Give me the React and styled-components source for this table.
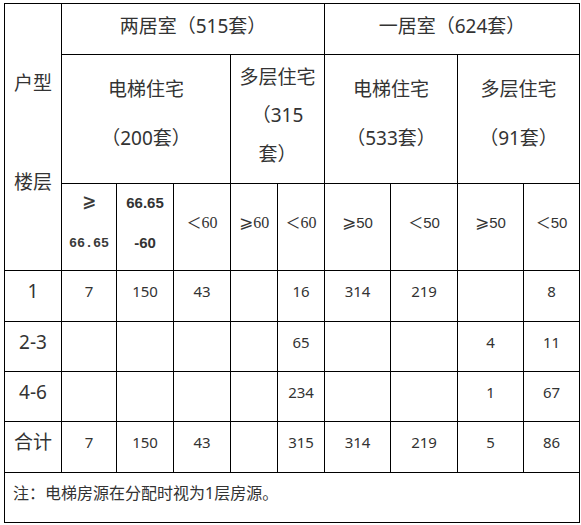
import React from "react";
import styled, { createGlobalStyle } from "styled-components";

const GlobalStyle = createGlobalStyle`
  html, body { margin: 0; padding: 0; background: #fff; }
  body { padding: 3px 0 0 4px; }
`;

const Table = styled.div`
  display: grid;
  grid-template-columns: 56px 54px 56px 56px 46px 46px 65px 66px 65px 55px;
  grid-template-rows: 50px 128px 86px 50px 49px 49px 50px 49px;
  gap: 1px;
  padding: 1px;
  background: #000;
  width: max-content;
  font-family: "Noto Sans", "Noto Sans CJK SC", sans-serif;
  color: #333;
`;

const Cell = styled.div`
  grid-column: span ${(p) => p.$span || 1};
  grid-row: span ${(p) => p.$rows || 1};
  background: #fff;
  display: flex;
  flex-direction: column;
  align-items: ${(p) => (p.$left ? "flex-start" : "center")};
  justify-content: center;
  box-sizing: border-box;
  padding: 0 0 ${(p) => (p.$pb ?? 10)}px ${(p) => (p.$left ? 8 : 0)}px;
  text-align: center;
  white-space: nowrap;
`;

const Line = styled.span`
  display: block;
  line-height: ${(p) => p.$lh || 30}px;
  font-size: ${(p) => p.$size || 19}px;
`;

const LabelGap = styled.span`
  display: block;
  height: 59px;
`;

const Mono = styled.span`
  display: block;
  line-height: 40px;
  font-family: "Liberation Mono", "DejaVu Sans Mono", monospace;
  font-weight: bold;
  font-size: 13.4px;
  color: #3a3a3a;
`;

const Bold = styled.span`
  display: block;
  line-height: 40px;
  font-family: "Liberation Sans", Arial, sans-serif;
  font-weight: bold;
  font-size: 15px;
  color: #333;
`;

const SerifRange = styled.span`
  font-family: "Liberation Serif", "DejaVu Serif", serif;
  font-size: 16px;
  line-height: 40px;
  color: #333;
`;

const SansRange = styled.span`
  font-family: "Liberation Sans", Arial, sans-serif;
  font-size: 15px;
  line-height: 40px;
  color: #333;
`;

const Sym = styled.span`
  font-family: "DejaVu Sans", "Noto Sans CJK SC", sans-serif;
  font-size: 17px;
`;

const FullSym = styled.span`
  font-family: "Noto Sans CJK SC", sans-serif;
  font-size: 15px;
`;

const Num = styled.span`
  font-size: 15px;
  line-height: 24px;
`;

const RowLabel = styled.span`
  font-size: 19px;
  line-height: 30px;
`;

const Note = styled.span`
  font-size: 16px;
  line-height: 24px;
`;

const ge = "⩾";
const lt = "＜";

const rows = [
  ["1", "7", "150", "43", "", "16", "314", "219", "", "8"],
  ["2-3", "", "", "", "", "65", "", "", "4", "11"],
  ["4-6", "", "", "", "", "234", "", "", "1", "67"],
  ["合计", "7", "150", "43", "", "315", "314", "219", "5", "86"],
];

export default function App() {
  return (
    <>
      <GlobalStyle />
      <Table>
        <Cell $rows={3} $pb={10}>
          <Line $lh={40}>户型</Line>
          <LabelGap />
          <Line $lh={40}>楼层</Line>
        </Cell>
        <Cell $span={5} $pb={7}>
          <Line>两居室（515套）</Line>
        </Cell>
        <Cell $span={4} $pb={7}>
          <Line>一居室（624套）</Line>
        </Cell>

        <Cell $span={3} $pb={11}>
          <Line $lh={49}>电梯住宅</Line>
          <Line $lh={49}>（200套）</Line>
        </Cell>
        <Cell $span={2} $pb={7}>
          <Line $lh={38.5}>多层住宅</Line>
          <Line $lh={38.5}>（315</Line>
          <Line $lh={38.5}>套）</Line>
        </Cell>
        <Cell $span={2} $pb={11}>
          <Line $lh={49}>电梯住宅</Line>
          <Line $lh={49}>（533套）</Line>
        </Cell>
        <Cell $span={2} $pb={11}>
          <Line $lh={49}>多层住宅</Line>
          <Line $lh={49}>（91套）</Line>
        </Cell>

        <Cell $pb={9}>
          <Mono><Sym>{ge}</Sym></Mono>
          <Mono>66.65</Mono>
        </Cell>
        <Cell $pb={9}>
          <Bold>66.65</Bold>
          <Bold>-60</Bold>
        </Cell>
        <Cell $pb={9}>
          <SerifRange><FullSym>{lt}</FullSym>60</SerifRange>
        </Cell>
        <Cell $pb={9}>
          <SerifRange><Sym>{ge}</Sym>60</SerifRange>
        </Cell>
        <Cell $pb={9}>
          <SerifRange><FullSym>{lt}</FullSym>60</SerifRange>
        </Cell>
        <Cell $pb={9}>
          <SansRange><Sym>{ge}</Sym>50</SansRange>
        </Cell>
        <Cell $pb={9}>
          <SansRange><FullSym>{lt}</FullSym>50</SansRange>
        </Cell>
        <Cell $pb={9}>
          <SansRange><Sym>{ge}</Sym>50</SansRange>
        </Cell>
        <Cell $pb={9}>
          <SansRange><FullSym>{lt}</FullSym>50</SansRange>
        </Cell>

        {rows.map((r, i) =>
          r.map((v, j) => (
            <Cell key={`${i}-${j}`}>
              {j === 0 ? <RowLabel>{v}</RowLabel> : <Num>{v}</Num>}
            </Cell>
          ))
        )}

        <Cell $span={10} $left>
          <Note>注：电梯房源在分配时视为1层房源。</Note>
        </Cell>
      </Table>
    </>
  );
}
